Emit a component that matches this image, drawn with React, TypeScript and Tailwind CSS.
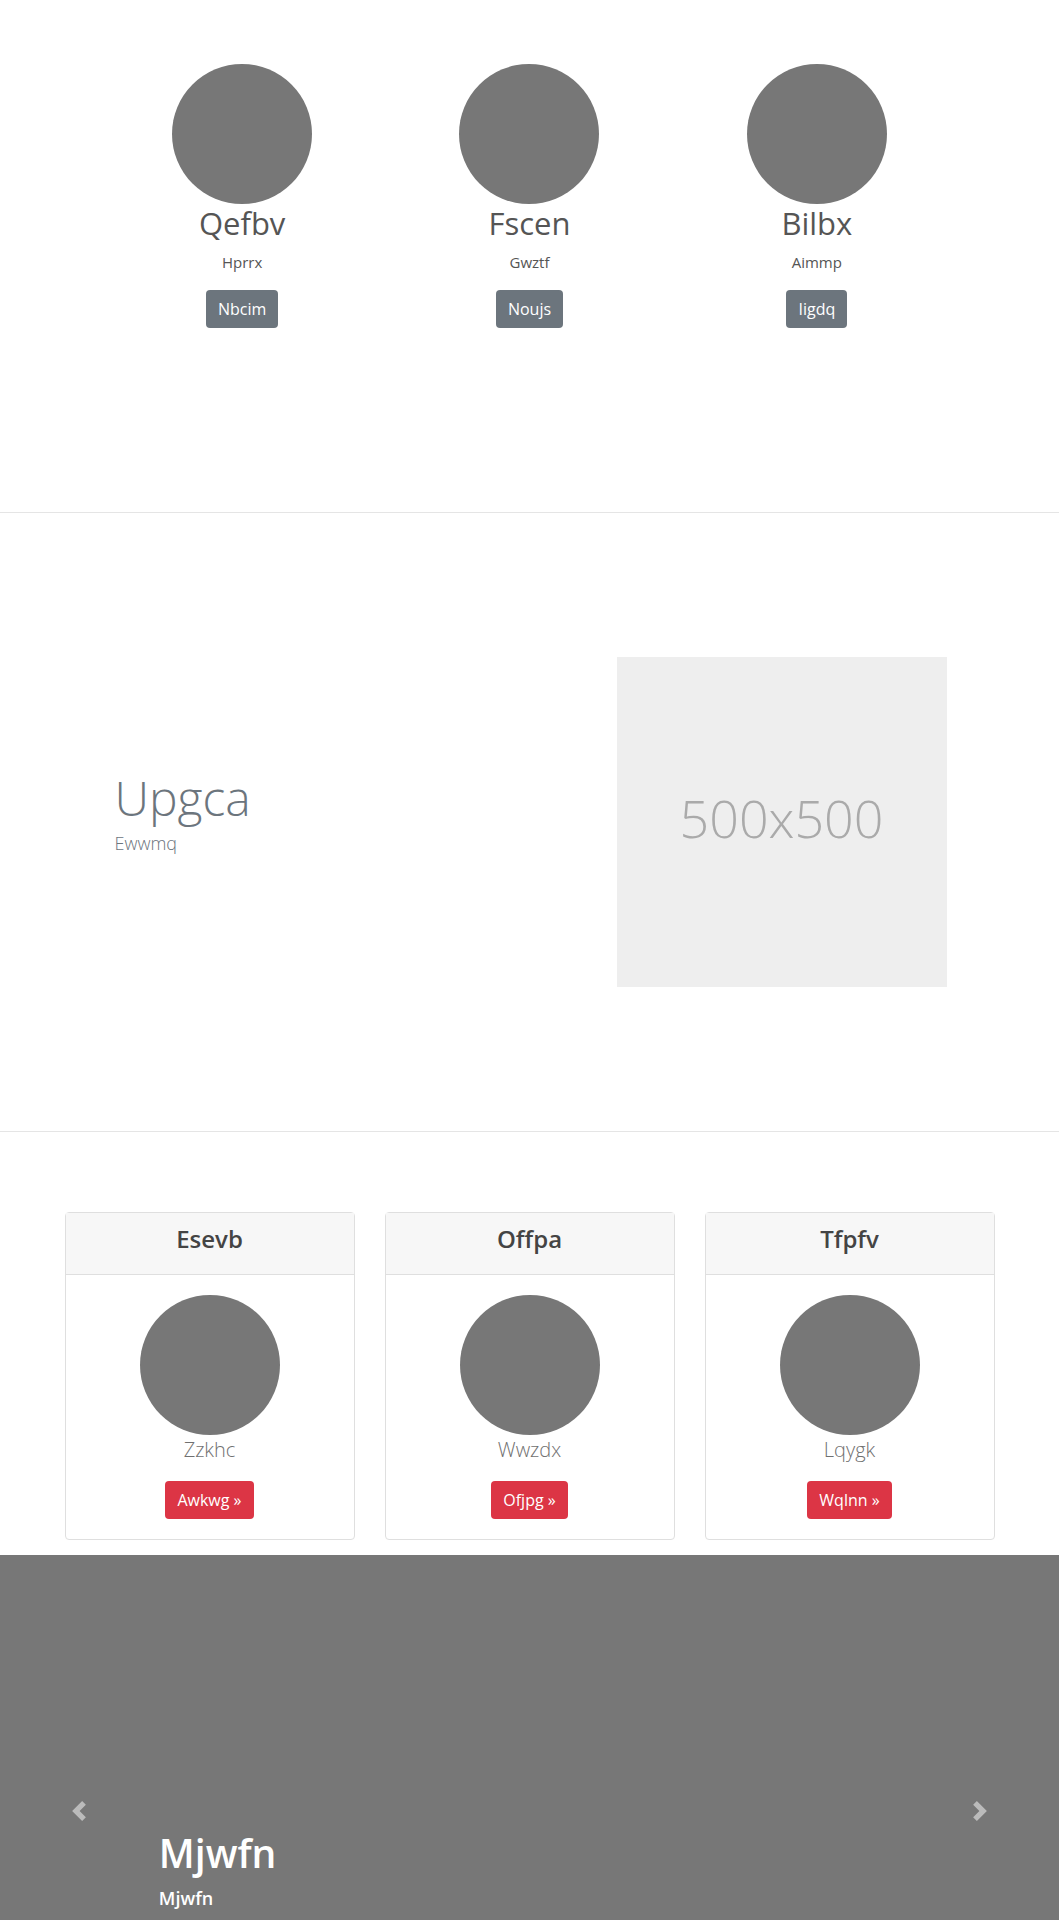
const team = [
  { name: "Qefbv", role: "Hprrx", action: "Nbcim" },
  { name: "Fscen", role: "Gwztf", action: "Noujs" },
  { name: "Bilbx", role: "Aimmp", action: "Iigdq" },
];

const cards = [
  { title: "Esevb", text: "Zzkhc", action: "Awkwg" },
  { title: "Offpa", text: "Wwzdx", action: "Ofjpg" },
  { title: "Tfpfv", text: "Lqygk", action: "Wqlnn" },
];

function Chevron({ dir }: { dir: "prev" | "next" }) {
  return (
    <svg width="20" height="20" viewBox="0 0 8 8" fill="#fff" className="opacity-50">
      {dir === "prev" ? (
        <path d="M5.25 0l-4 4 4 4 1.5-1.5-2.5-2.5 2.5-2.5-1.5-1.5z" />
      ) : (
        <path d="M2.75 0l-1.5 1.5 2.5 2.5-2.5 2.5 1.5 1.5 4-4-4-4z" />
      )}
    </svg>
  );
}

export default function App() {
  return (
    <div className="min-h-screen bg-white font-['Open_Sans',sans-serif] text-[#212529]">
      {/* team */}
      <section className="h-[513px] border-b border-[#e5e5e5] pt-16">
        <div className="mx-auto grid w-[862px] grid-cols-3">
          {team.map((m) => (
            <div key={m.name} className="flex flex-col items-center text-center">
              <div className="h-[140px] w-[140px] rounded-full bg-[#777]" />
              <h2 className="mb-2 text-[31px] leading-[1.24] font-normal text-[#555]">{m.name}</h2>
              <p className="mb-4 text-[15px] leading-6 text-[#555]">{m.role}</p>
              <button className="h-[38px] rounded bg-[#6c757d] px-3 text-[16px] text-white">
                {m.action}
              </button>
            </div>
          ))}
        </div>
      </section>

      {/* feature */}
      <section className="flex h-[619px] items-center border-b border-[#e5e5e5]">
        <div className="mx-auto flex w-[960px] items-center px-[15px]">
          <div className="w-[465px] pb-[20px] pl-[50px]">
            <h1 className="mb-1 text-[48px] leading-[1.2] font-light text-[#6c757d]">Upgca</h1>
            <p className="text-[18px] leading-6 font-light text-[#6c757d]">Ewwmq</p>
          </div>
          <div className="ml-[87px] flex h-[330px] w-[330px] items-center justify-center bg-[#eee] pb-2">
            <span className="text-[52px] font-light text-[#aaa]">500x500</span>
          </div>
        </div>
      </section>

      {/* cards */}
      <section className="pt-[80px] pb-[15px]">
        <div className="mx-auto grid w-[960px] grid-cols-3 gap-[30px] px-[15px]">
          {cards.map((c) => (
            <div key={c.title} className="rounded border border-[#dfdfdf] bg-white">
              <div className="border-b border-[#dfdfdf] bg-[#f7f7f7] px-5 py-3 text-center">
                <h4 className="mb-2 text-[24px] leading-[1.2] font-semibold text-[#444]">{c.title}</h4>
              </div>
              <div className="flex flex-col items-center p-5 text-center">
                <div className="h-[140px] w-[140px] rounded-full bg-[#777]" />
                <p className="mb-4 text-[20px] leading-[30px] font-light text-[#707070]">{c.text}</p>
                <button className="h-[38px] rounded bg-[#dc3545] px-3 text-[16px] text-white">
                  {c.action} »
                </button>
              </div>
            </div>
          ))}
        </div>
      </section>

      {/* carousel */}
      <section className="relative h-[512px] overflow-hidden bg-[#777]">
        <a className="absolute inset-y-0 left-0 flex w-[15%] items-center justify-center">
          <Chevron dir="prev" />
        </a>
        <a className="absolute inset-y-0 right-0 flex w-[15%] items-center justify-center">
          <Chevron dir="next" />
        </a>
        <div className="absolute top-[254px] right-[15%] left-[15%] pt-5 text-white">
          <h1 className="mb-2 text-[39px] leading-[1.23] font-semibold">Mjwfn</h1>
          <p className="text-[18px] leading-[27px] font-semibold">Mjwfn</p>
        </div>
      </section>
    </div>
  );
}
